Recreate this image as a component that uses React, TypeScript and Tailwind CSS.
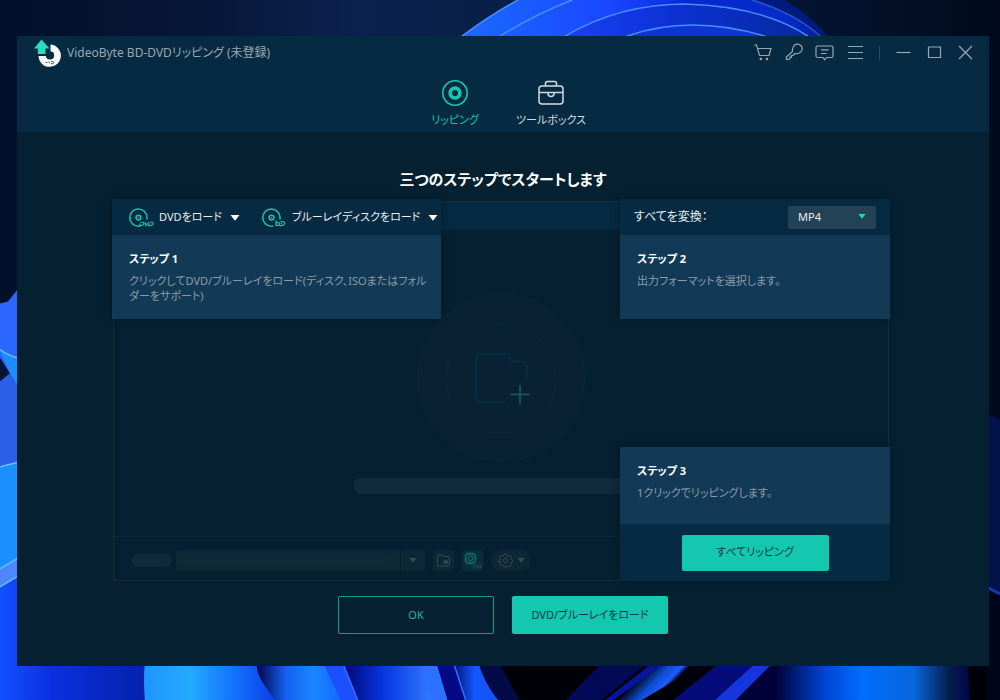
import type { ReactNode } from "react";

function Wallpaper() {
  return (
    <svg
      className="absolute inset-0 h-full w-full"
      viewBox="0 0 1000 700"
      preserveAspectRatio="none"
      aria-hidden="true"
    >
      <defs>
        <linearGradient id="sky" x1="0" x2="1" y1="0" y2="0">
          <stop offset="0" stopColor="#020f2a" />
          <stop offset="0.2" stopColor="#061736" />
          <stop offset="0.36" stopColor="#0b2250" />
          <stop offset="0.48" stopColor="#082048" />
          <stop offset="0.82" stopColor="#03132f" />
          <stop offset="1" stopColor="#010a1c" />
        </linearGradient>
        <linearGradient id="petal" gradientUnits="userSpaceOnUse" x1="460" x2="830" y1="0" y2="0">
          <stop offset="0" stopColor="#1a6bff" />
          <stop offset="0.4" stopColor="#1a47ff" />
          <stop offset="0.62" stopColor="#0a2ce0" />
          <stop offset="0.88" stopColor="#0a34cf" />
          <stop offset="1" stopColor="#02104a" />
        </linearGradient>
        <linearGradient id="shade" x1="0" x2="1" y1="0" y2="0">
          <stop offset="0" stopColor="#1a40f5" />
          <stop offset="0.5" stopColor="#0b30cf" />
          <stop offset="1" stopColor="#062a9e" />
        </linearGradient>
        <linearGradient id="bottomLeft" gradientUnits="userSpaceOnUse" x1="0" x2="150" y1="0" y2="0">
          <stop offset="0" stopColor="#1450ff" />
          <stop offset="0.35" stopColor="#0b2fe0" />
          <stop offset="1" stopColor="#0420a8" />
        </linearGradient>
        <linearGradient id="blobA" gradientUnits="userSpaceOnUse" x1="144" x2="275" y1="0" y2="0">
          <stop offset="0" stopColor="#1f93ff" />
          <stop offset="0.35" stopColor="#25aaff" />
          <stop offset="0.65" stopColor="#1477ff" />
          <stop offset="1" stopColor="#0b3fe8" />
        </linearGradient>
        <linearGradient id="blobB" gradientUnits="userSpaceOnUse" x1="258" x2="350" y1="0" y2="0">
          <stop offset="0" stopColor="#020650" />
          <stop offset="0.3" stopColor="#1460f0" />
          <stop offset="0.6" stopColor="#1a86ff" />
          <stop offset="1" stopColor="#1160ff" />
        </linearGradient>
        <linearGradient id="blobC" gradientUnits="userSpaceOnUse" x1="345" x2="430" y1="0" y2="0">
          <stop offset="0" stopColor="#030875" />
          <stop offset="0.45" stopColor="#0636e0" />
          <stop offset="1" stopColor="#3178ff" />
        </linearGradient>
        <linearGradient id="blobD" gradientUnits="userSpaceOnUse" x1="450" x2="500" y1="0" y2="0">
          <stop offset="0" stopColor="#02065c" />
          <stop offset="0.5" stopColor="#1157ff" />
          <stop offset="1" stopColor="#1a50f0" />
        </linearGradient>
        <linearGradient id="blobE" gradientUnits="userSpaceOnUse" x1="775" x2="968" y1="0" y2="0">
          <stop offset="0" stopColor="#000038" />
          <stop offset="0.25" stopColor="#0043cf" />
          <stop offset="0.45" stopColor="#006cff" />
          <stop offset="0.72" stopColor="#0866dd" />
          <stop offset="0.9" stopColor="#03204f" />
          <stop offset="1" stopColor="#000748" />
        </linearGradient>
        <linearGradient id="streakA" gradientUnits="userSpaceOnUse" x1="650" x2="685" y1="664" y2="698">
          <stop offset="0" stopColor="#000208" />
          <stop offset="0.3" stopColor="#0b4dcf" />
          <stop offset="0.5" stopColor="#1f5cff" />
          <stop offset="0.6" stopColor="#000010" />
        </linearGradient>
      </defs>

      <rect width="1000" height="700" fill="url(#sky)" />

      {/* upper bloom */}
      <path d="M462 36Q492 14 518 0H784Q808 14 828 36Z" fill="url(#petal)" />
      <path d="M620 14Q650 2 690 0H752Q800 12 825 36H600Z" fill="#0526c4" opacity="0.6" />
      <path d="M565 36Q620 4 685 4Q762 6 808 36Z" fill="url(#shade)" />
      <path d="M627 36Q690 14 765 36Z" fill="#0d35d6" />
      <path d="M752 0Q795 13 820 36H828Q808 14 784 0Z" fill="#031a7d" />
      <g fill="none" stroke="#4a8dff" strokeWidth="1.5">
        <path d="M462 36Q492 14 518 0" />
        <path d="M500 36Q536 14 572 0" />
        <path d="M565 36Q620 4 685 4Q762 6 808 36" />
        <path d="M627 36Q690 14 765 36" />
        <path d="M752 0Q795 13 820 36" strokeOpacity="0.5" />
      </g>

      {/* left edge */}
      <path d="M0 303L8 301L20 286V400H0Z" fill="#2a66ff" />
      <path d="M0 350Q8 356 20 358V388L10 373Z" fill="#1c8cff" />
      <path d="M0 357L10 373L0 381Z" fill="#061536" />
      <path d="M0 381L10 373L20 390V465H0Z" fill="#2b5fe8" />
      <path d="M0 466L20 461V562L0 572Z" fill="#1a90ff" />
      <path d="M0 568L20 556V574L0 586Z" fill="#4f86ff" />
      <path d="M0 586L20 574V660H150V700H0Z" fill="url(#bottomLeft)" />
      <g fill="none" stroke="#63c0ff" strokeWidth="1.5">
        <path d="M0 349Q8 355 20 358" />
        <path d="M0 466L20 461" />
        <path d="M0 568L20 556" />
        <path d="M0 586L20 574" />
      </g>

      {/* lower bloom */}
      <rect x="250" y="660" width="750" height="40" fill="#000008" />
      <path d="M145 660Q143 680 145 700H278Q254 676 257 660Z" fill="url(#blobA)" />
      <path d="M257 660Q256 676 276 700H350L322 660Z" fill="url(#blobB)" />
      <path d="M322 660L341 700H358L342 660Z" fill="#1c50ff" />
      <path d="M342 660L358 700H432L421 660Z" fill="url(#blobC)" />
      <path d="M421 660L432 700H448L436 660Z" fill="#2c70ff" />
      <path d="M436 660L448 700H466L453 660Z" fill="#030a84" />
      <path d="M453 660L466 700H499Q484 682 478 660Z" fill="url(#blobD)" />
      <path d="M478 660Q484 682 499 700H520L498 660Z" fill="#020a48" />
      <path d="M421 660L432 700M342 660L358 700M453 660L466 700" stroke="#2c74ff" strokeWidth="1.5" />
      <path d="M604 660L565 700H600L650 660Z" fill="#020a58" />
      <path d="M708 660L640 700H600L670 660Z" fill="url(#streakA)" />
      <path d="M655 660L604 700H612L668 660Z" fill="#0515a0" />
      <path d="M775 660L732 700H672L722 660Z" fill="#030c78" />
      <path d="M775 660L735 700H714L758 660Z" fill="#1636dd" />
      <path d="M775 660L735 700H970Q968 680 968 660Z" fill="url(#blobE)" />

      {/* right edge */}
      <path d="M986 413Q994 416 1000 420V596L986 585Z" fill="#02124a" />
      <path d="M986 585L1000 593V700H986Z" fill="#00051c" />
      <path d="M986 586L1000 593" stroke="#1238a8" strokeWidth="3" />
    </svg>
  );
}

function Logo() {
  return (
    <svg className="h-7 w-7 shrink-0" viewBox="0 0 28 28" aria-hidden="true">
      <path
        d="M16.500 5.500A11.200 11.200 0 1 1 4.500 17H11.800A4.200 4.200 0 1 0 16.500 12.200Z"
        fill="#f7fafa"
      />
      <path d="M7.500 0.500L15.500 9.500H11.500V15H3.800V9.500H0Z" fill="#2bdcc0" />
      <path
        d="M11.500 23.500h2M14.500 22.500l1.500 2M17 22.500h2a1.200 1.200 0 0 1 0 2.200h-2"
        stroke="#31536b"
        strokeWidth="0.900"
        fill="none"
      />
    </svg>
  );
}

function WindowButton({ label, children }: { label: string; children: ReactNode }) {
  return (
    <button type="button" aria-label={label} className="flex h-5 w-[19px] items-center justify-center">
      <svg
        className="h-[19px] w-[19px]"
        viewBox="0 0 19 19"
        fill="none"
        stroke="currentColor"
        strokeWidth="1.200"
        aria-hidden="true"
      >
        {children}
      </svg>
    </button>
  );
}

function Caret({ className }: { className: string }) {
  return (
    <svg className={className} viewBox="0 0 10 6" fill="currentColor" aria-hidden="true">
      <path d="M0.500 0H9.500L5 5.800Z" />
    </svg>
  );
}

function DiscIcon({ kind }: { kind: "dvd" | "bluray" }) {
  return (
    <svg
      className="h-5 w-[26px] shrink-0 text-[#14c8b0]"
      viewBox="0 0 26 20"
      fill="none"
      stroke="currentColor"
      strokeWidth="1.500"
      aria-hidden="true"
    >
      <path d="M9.500 18.200A8.600 8.600 0 1 1 18 9.600V11.500" />
      <path d="M9.500 18.200H11" />
      <circle cx="9.500" cy="9.600" r="2.400" />
      <circle cx="9.500" cy="9.600" r="0.700" fill="currentColor" stroke="none" />
      {kind === "dvd" ? (
        <g strokeWidth="1.100">
          <path d="M11.500 14.300H13.500Q15.500 14.600 14.600 16.300Q13.800 17.700 12 17.700H10.600L11.300 15.500" />
          <path d="M16 14L17 17.700L20 14" />
          <path d="M21 14.300H22.800Q24.800 14.600 24 16.300Q23.200 17.700 21.400 17.700H19.600L20.300 15.500" />
        </g>
      ) : (
        <g strokeWidth="1.200">
          <path d="M14 12.500V17.300H16.300A1.300 1.300 0 0 0 16.300 14.700H14.300" />
          <path d="M18.500 13.700Q23 13.300 22.600 15.800Q21.500 18.200 17.500 17.900M18.800 15.700H20" />
        </g>
      )}
    </svg>
  );
}

function LoadButton({ kind, label }: { kind: "dvd" | "bluray"; label: string }) {
  return (
    <button type="button" className="flex items-center text-[11px] whitespace-nowrap text-[#e8eef2]">
      <DiscIcon kind={kind} />
      <span className="ml-1">{label}</span>
      <Caret className="ml-2 h-1.5 w-2.5 text-white" />
    </button>
  );
}

function Step({ title, children, className }: { title: string; children: ReactNode; className: string }) {
  return (
    <div className={`bg-[#123a56] pt-4 pr-2 pl-[17px] ${className}`}>
      <h2 className="text-[11px] leading-4 font-bold text-white">{title}</h2>
      <p className="mt-1.5 text-[11px] leading-[15px] text-[#8b9ca8]">{children}</p>
    </div>
  );
}

function QueuePanel() {
  return (
    <div className="col-start-1 row-start-1 mx-px mt-0.5 flex flex-col border border-[#202a35]">
      <div className="h-7 bg-[#062a41]" />
      <div className="flex flex-1 flex-col items-center pt-[63px]">
        <svg className="h-[170px] w-[170px]" viewBox="0 0 170 170" fill="none" aria-hidden="true">
          <circle cx="85" cy="85" r="83.500" fill="#082234" stroke="#07293b" />
          <circle cx="85" cy="85" r="55" stroke="#07293b" />
          <path
            d="M90 109H66Q60 109 60 103V67Q60 61 66 61H89Q93 61 94 65L95.500 68.500H105Q111 68.500 111 75V86"
            stroke="#082b3f"
            strokeWidth="2.500"
          />
          <path d="M104 92V111M94.500 101.500H113.500" stroke="#0d5557" strokeWidth="2" />
        </svg>
        <div className="mt-[15px] h-4 w-[296px] rounded-full bg-[#102b3b]" />
      </div>
      <div className="flex h-11 items-center border-t border-[#0a2a3c] pt-1 pl-[17px] text-[#344c5b]">
        <div className="h-[13px] w-[41px] rounded-full bg-[#102a3a]" />
        <div className="ml-1 flex h-[21px] w-[249px] rounded-xs bg-[#0e2735]">
          <input
            type="text"
            aria-label="保存先"
            className="my-1 ml-0.5 min-w-0 flex-1 rounded-full bg-[#0f2939] px-2 text-xs outline-none"
          />
          <button
            type="button"
            aria-label="保存先の一覧"
            className="ml-[9px] flex w-[25px] items-center justify-center border-l border-[#07202e]"
          >
            <Caret className="h-[5px] w-2" />
          </button>
        </div>
        <button
          type="button"
          aria-label="フォルダーを開く"
          className="ml-2 flex h-[21px] w-[21px] items-center justify-center rounded-xs bg-[#0e2735]"
        >
          <svg className="h-[15px] w-[15px]" viewBox="0 0 15 15" fill="none" stroke="currentColor" aria-hidden="true">
            <path d="M1.500 11.500V3.500Q1.500 2 3 2H6L7.500 3.500H12Q13.500 3.500 13.500 5V11.500Q13.500 13 12 13H3Q1.500 13 1.500 11.500Z" />
            <rect x="8" y="8" width="3.500" height="2" fill="currentColor" />
          </svg>
        </button>
        <button
          type="button"
          aria-label="ハードウェアアクセラレーション"
          className="ml-2 flex h-[21px] w-[21px] items-center justify-center rounded-xs bg-[#0c2b38] text-[#0a625f]"
        >
          <svg className="h-[19px] w-[19px]" viewBox="0 0 19 19" fill="none" stroke="currentColor" aria-hidden="true">
            <rect x="3" y="3" width="9" height="9" rx="1.500" strokeWidth="1.800" />
            <circle cx="7.500" cy="7.500" r="2.200" strokeWidth="1.500" />
            <path d="M5 1V3M7.500 1V3M10 1V3M5 12V14M7.500 12V14M1 5H3M1 7.500H3M1 10H3M12 5H14M12 7.500H14" />
            <circle cx="12" cy="15.500" r="1.800" strokeWidth="0.800" />
            <path d="M15.300 17.500V13.700L17.700 17.300V13.500" strokeWidth="0.800" />
          </svg>
        </button>
        <button
          type="button"
          aria-label="設定"
          className="ml-2 flex h-[21px] w-10 items-center justify-center gap-1 rounded-full bg-[#0e2735]"
        >
          <svg className="h-[15px] w-[15px]" viewBox="0 0 15 15" fill="none" stroke="currentColor" aria-hidden="true">
            <path d="M6.300 1h2.400l.5 1.700 1.100.5 1.600-.8 1.500 1.600-.8 1.600.4 1 1.500.5v1.800l-1.500.6-.4 1 .8 1.600-1.500 1.600-1.600-.8-1.100.5L8.700 14H6.300l-.5-1.600-1.100-.5-1.600.8-1.500-1.600.8-1.600-.4-1L.5 8.900V7.100L2 6.500l.4-1-.8-1.600L3.100 2.400l1.600.8 1.100-.5Z" />
            <circle cx="7.500" cy="7.500" r="2.200" />
          </svg>
          <Caret className="h-[5px] w-2" />
        </button>
      </div>
    </div>
  );
}

const cardShadow = "shadow-[0_0_8px_rgba(0,10,15,0.45)]";

export default function App() {
  return (
    <div className="relative flex min-h-screen flex-col overflow-hidden pt-9 pr-[11px] pb-[35px] pl-[17px] font-['Noto_Sans','Noto_Sans_CJK_JP',sans-serif] [font-feature-settings:'palt']">
      <Wallpaper />
      <div className="relative flex flex-1 flex-col bg-[#052131]">
        <header className="bg-[#062a41]">
          <div className="flex h-[33px] items-center pr-3.5 pl-[17px] text-[#98a7b1]">
            <Logo />
            <h1 className="ml-[5px] text-xs leading-5 whitespace-nowrap">VideoByte BD-DVDリッピング (未登録)</h1>
            <div className="ml-auto flex items-center gap-3">
              <WindowButton label="購入">
                <path d="M1 2H3.500L6.500 12.500H16L18 5.500H4.600" />
                <circle cx="7.800" cy="16" r="0.700" />
                <circle cx="14" cy="16" r="0.700" />
              </WindowButton>
              <WindowButton label="登録">
                <path d="M8.500 8.500Q8 6 9.300 4A4.600 4.600 0 1 1 15.200 10Q12.800 11.200 11 10.500L9 12.500H7.500V14.200H6V15.500L4.800 16.500H2.500L2.200 14.200Z" />
              </WindowButton>
              <WindowButton label="フィードバック">
                <path d="M2.500 3H16.500Q18 3 18 4.500V13Q18 14.500 16.500 14.500H11.500L9.700 16.800L8 14.500H2.500Q1 14.500 1 13V4.500Q1 3 2.500 3ZM6 6.800H13.500M6 10.500H11.500" />
              </WindowButton>
              <WindowButton label="メニュー">
                <path d="M2 3.500H17M2 9.500H17M2 15.500H17" />
              </WindowButton>
              <span className="mx-0.5 h-3.5 w-px bg-[#274b60]" />
              <WindowButton label="最小化">
                <path d="M2.500 9.500H16.500" />
              </WindowButton>
              <WindowButton label="最大化">
                <path d="M3.500 4H15.500V14.500H3.500Z" />
              </WindowButton>
              <WindowButton label="閉じる">
                <path d="M3 3L16 16M16 3L3 16" />
              </WindowButton>
            </div>
          </div>
          <nav className="flex justify-center pt-[11px] pb-1 text-[11px] leading-4">
            <button type="button" className="flex w-24 flex-col items-center gap-1.5 text-[#14c8b0]">
              <svg className="h-[26px] w-[26px]" viewBox="0 0 26 26" fill="none" stroke="currentColor" aria-hidden="true">
                <circle cx="13" cy="13" r="12.200" strokeWidth="1.600" />
                <circle cx="13" cy="13" r="4.900" strokeWidth="3.600" />
              </svg>
              リッピング
            </button>
            <button type="button" className="flex w-24 flex-col items-center gap-1.5 text-[#d5dce1]">
              <svg
                className="h-[26px] w-[26px]"
                viewBox="0 0 26 26"
                fill="none"
                stroke="currentColor"
                strokeWidth="1.500"
                aria-hidden="true"
              >
                <rect x="1" y="6" width="24" height="18" rx="3" />
                <path d="M7.500 6V3.500Q7.500 1.500 9.500 1.500H16.500Q18.500 1.500 18.500 3.500V6" />
                <path d="M1 12.500H25M10 12.500V13.500A3 3 0 0 0 16 13.500V12.500" />
              </svg>
              ツールボックス
            </button>
          </nav>
        </header>

        <main className="flex flex-1 flex-col pt-[35px] pb-8">
          <h2 className="text-center text-[15px] leading-6 font-bold text-white">三つのステップでスタートします</h2>

          <div className="mt-2 mr-[99px] ml-[95px] grid min-h-[382px] flex-1">
            <QueuePanel />
            <div className="relative col-start-1 row-start-1 flex justify-between">
              <section className={`w-[329px] self-start bg-[#062a41] ${cardShadow}`}>
                <div className="flex h-9 items-center gap-[22px] pt-px pl-[17px]">
                  <LoadButton kind="dvd" label="DVDをロード" />
                  <LoadButton kind="bluray" label="ブルーレイディスクをロード" />
                </div>
                <Step title="ステップ 1" className="h-[84px]">
                  クリックしてDVD/ブルーレイをロード(ディスク、ISOまたはフォル
                  <br />
                  ダーをサポート)
                </Step>
              </section>

              <div className="flex w-[270px] flex-col justify-between">
                <section className={`bg-[#062a41] ${cardShadow}`}>
                  <div className="flex h-9 items-center justify-between px-3.5 text-xs text-[#e8eef2]">
                    <label htmlFor="format">すべてを変換：</label>
                    <div className="relative">
                      <select
                        id="format"
                        className="block h-[23px] w-[88px] appearance-none rounded-xs bg-[#234255] pl-2.5 text-[11px] text-[#e8eef2] outline-none"
                      >
                        <option>MP4</option>
                      </select>
                      <Caret className="pointer-events-none absolute top-2 right-2.5 h-[5px] w-2 text-[#25d3bb]" />
                    </div>
                  </div>
                  <Step title="ステップ 2" className="h-[84px]">
                    出力フォーマットを選択します。
                  </Step>
                </section>

                <section className={`bg-[#062a41] ${cardShadow}`}>
                  <Step title="ステップ 3" className="h-[77px]">
                    1クリックでリッピングします。
                  </Step>
                  <div className="flex h-[57px] items-center justify-center">
                    <button type="button" className="h-9 w-[147px] rounded-xs bg-[#14c8b0] text-[11px] text-[#06384a]">
                      すべてリッピング
                    </button>
                  </div>
                </section>
              </div>
            </div>
          </div>

          <div className="mt-[15px] flex justify-center gap-[18px] text-[11px]">
            <button type="button" className="h-[38px] w-[156px] rounded-xs border border-[#109a8c] text-[#14b8a4]">
              OK
            </button>
            <button type="button" className="h-[38px] w-[156px] rounded-xs bg-[#14c8b0] text-[#06384a]">
              DVD/ブルーレイをロード
            </button>
          </div>
        </main>
      </div>
    </div>
  );
}
